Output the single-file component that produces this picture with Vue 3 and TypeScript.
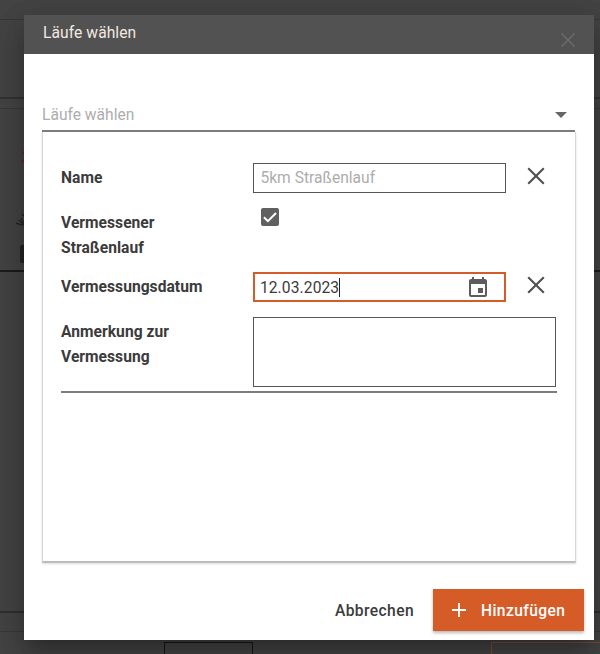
<script setup lang="ts">
import { ref } from 'vue'

const runName = ref('')
const measured = ref(true)
const measuredOn = ref('12.03.2023')
const remark = ref('')
</script>

<template>
  <div class="screen">
    <div class="page" aria-hidden="true">
      <div class="band head"></div>
      <div class="band toolbar"></div>
      <div class="band gap"></div>
      <div class="band list">
        <svg class="glyph cross" viewBox="0 0 14 14"><path d="M0 1l12 12M12 1L0 13" /></svg>
        <svg class="glyph runner" viewBox="0 0 14 14"><path d="M0 10l7 2.500M3 7l5 5M5 5l3 5M6 1l3 3" /></svg>
        <span class="chip"></span>
      </div>
      <div class="band body"></div>
      <div class="band divider"></div>
      <div class="band foot"></div>
      <div class="tiles"><span class="tile"></span><span class="tile warm"></span></div>
    </div>

    <section class="dialog" role="dialog">
      <header class="titlebar">
        <span class="title">Läufe wählen</span>
        <svg class="close" viewBox="0 0 14 14"><path d="M.5 .5l13 13M13.5 .5l-13 13" /></svg>
      </header>

      <div class="select">
        <span>Läufe wählen</span>
        <svg class="arrow" viewBox="0 0 12 6"><path d="M0 0h12L6 6z" /></svg>
      </div>

      <div class="panel">
        <div class="form">
          <label class="label">Name</label>
          <div class="field box">
            <span v-if="!runName" class="placeholder">5km Straßenlauf</span>
            <span v-else>{{ runName }}</span>
          </div>
          <svg class="clear" viewBox="0 0 18 18"><path d="M1.2 1.2l15.6 15.6M16.8 1.2L1.2 16.8" /></svg>

          <label class="label">Vermessener Straßenlauf</label>
          <svg class="checkbox" viewBox="0 0 18 18" @click="measured = !measured">
            <rect width="18" height="18" rx="2" />
            <path v-if="measured" d="M2.9 9.2l4 4L15 5" />
          </svg>

          <label class="label">Vermessungsdatum</label>
          <div class="field box active">
            <span class="date">{{ measuredOn }}</span><i class="caret"></i>
            <svg class="calendar" viewBox="0 0 18 20">
              <path d="M16 2h-1V0h-2v2H5V0H3v2H2C.9 2 0 2.9 0 4v14c0 1.1.9 2 2 2h14c1.1 0 2-.9 2-2V4c0-1.1-.9-2-2-2zm0 16H2V7h14v11zM9 11h5v5H9z" />
            </svg>
          </div>
          <svg class="clear" viewBox="0 0 18 18"><path d="M1.2 1.2l15.6 15.6M16.8 1.2L1.2 16.8" /></svg>

          <label class="label">Anmerkung zur Vermessung</label>
          <div class="note box">{{ remark }}</div>
        </div>
      </div>

      <footer class="actions">
        <button class="cancel">Abbrechen</button>
        <button class="add">
          <svg class="plus" viewBox="0 0 14 14"><path d="M7 0v14M0 7h14" /></svg>
          <span>Hinzufügen</span>
        </button>
      </footer>
    </section>
  </div>
</template>

<style>
html, body { margin: 0; overflow: hidden; }
</style>

<style scoped>
* { box-sizing: border-box; }
.screen {
  position: relative;
  width: 600px;
  height: 654px;
  overflow: hidden;
  background: #444;
  color: #3b3b3b;
  font: 15.6px/25px Roboto, sans-serif;
}
.page { display: flex; flex-direction: column; height: 654px; }
.band { flex: none; }
.head { height: 20px; border-bottom: 1px solid #383838; }
.toolbar { height: 79px; border-bottom: 2px solid #333; }
.gap { height: 10px; border-bottom: 1px solid #393939; }
.list {
  display: flex;
  flex-direction: column;
  flex: none;
  height: 163px;
  padding: 41px 0 0 16px;
  border-bottom: 2px solid #1c1c1c;
}
.glyph { flex: none; width: 14px; height: 14px; fill: none; stroke: #222; stroke-width: 1.2; }
.cross { margin-left: 5px; stroke: #6a2039; stroke-width: 1.6; }
.runner { margin-top: 49px; }
.chip { flex: none; width: 18px; height: 18px; margin: 18px 0 0 4px; border-radius: 2px; background: #242424; }
.body { height: 341px; border-bottom: 2px solid #303030; }
.divider { height: 19px; border-bottom: 1px solid #393939; }
.foot { height: 10px; }
.tiles { display: flex; justify-content: space-between; padding-left: 164px; }
.tile { flex: none; width: 89px; height: 20px; border: 1px solid #171717; }
.tile.warm { width: 109px; border-color: #854a31; border-right: 0; }

.dialog {
  position: absolute;
  top: 15px;
  left: 24px;
  display: flex;
  flex-direction: column;
  width: 569.5px;
  height: 625.3px;
  background: #fff;
  box-shadow: 0 11px 15px -7px rgba(0, 0, 0, .2), 0 14px 28px 3px rgba(0, 0, 0, .14), 0 9px 34px 8px rgba(0, 0, 0, .12);
}
.titlebar {
  display: flex;
  flex: none;
  justify-content: space-between;
  height: 38.5px;
  padding: 6px 18.5px 0 19px;
  background: #525252;
  color: #f3e9e1;
  letter-spacing: .08px;
}
.close { width: 14px; height: 14px; margin-top: 12px; fill: none; stroke: #6b6b6b; stroke-width: 1.5; }
.select {
  display: flex;
  flex: none;
  justify-content: space-between;
  height: 40px;
  margin: 38.5px 18.5px 0 18px;
  padding: 11px 8px 0 0;
  border-bottom: 2px solid #7c7c7c;
  color: #adadad;
}
.arrow { width: 12px; height: 6px; margin-top: 9px; fill: #666; }
.panel {
  flex: none;
  height: 431px;
  margin: 0 18px;
  padding: 31px 18px 0;
  border: 1px solid #d6d6d6;
  border-top: 0;
  border-bottom: 2px solid #bdbdbd;
  box-shadow: 0 1px 2px rgba(0, 0, 0, .14);
}
.form {
  display: grid;
  grid-template-columns: 192.4px 253px 50.1px;
  grid-template-rows: 45px 64px 45px 75px;
  align-items: start;
  height: 230px;
  border-bottom: 2px solid #7c7c7c;
}
.label { width: 160px; margin-top: 3px; font-weight: 700; letter-spacing: .03px; }
.box { border: 1px solid #555; background: #fff; }
.field { display: flex; align-items: center; height: 30px; padding: 0 6px; }
.placeholder { color: #adadad; letter-spacing: .02px; }
.active { border: 2px solid #d55b27; height: 30px; padding: 0 17px 0 4.500px; }
.date { padding-top: 2px; letter-spacing: .1px; }
.caret { flex: none; width: 1px; height: 19px; background: #222; }
.calendar { width: 18px; height: 20px; margin-left: auto; fill: #5c5c5c; }
.clear { width: 18px; height: 18px; margin: 4px 0 0 20.5px; fill: none; stroke: #505050; stroke-width: 2.1; }
.checkbox { grid-column: 2 / 4; width: 18px; height: 18px; margin: 0 0 0 7.600px; fill: #606060; }
.checkbox path { fill: none; stroke: #fff; stroke-width: 2; }
.note { grid-column: 2 / 4; height: 70px; }
.actions { display: flex; justify-content: flex-end; margin-top: 26px; padding-right: 9.5px; }
button {
  height: 42px;
  border: 0;
  font: 500 15.6px/42px Roboto, sans-serif;
  letter-spacing: .4px;
}
.cancel { margin-right: 19px; padding: 1px 0 0; background: none; color: #3b3b3b; }
.add {
  display: flex;
  align-items: center;
  width: 151px;
  padding: 0 0 0 19px;
  background: #d55b27;
  color: #fff;
  box-shadow: 0 2px 3px rgba(0, 0, 0, .28);
}
.add span { padding-top: 2px; }
.plus { width: 14px; height: 14px; margin-right: 15px; fill: none; stroke: #fff; stroke-width: 1.8; }
</style>
